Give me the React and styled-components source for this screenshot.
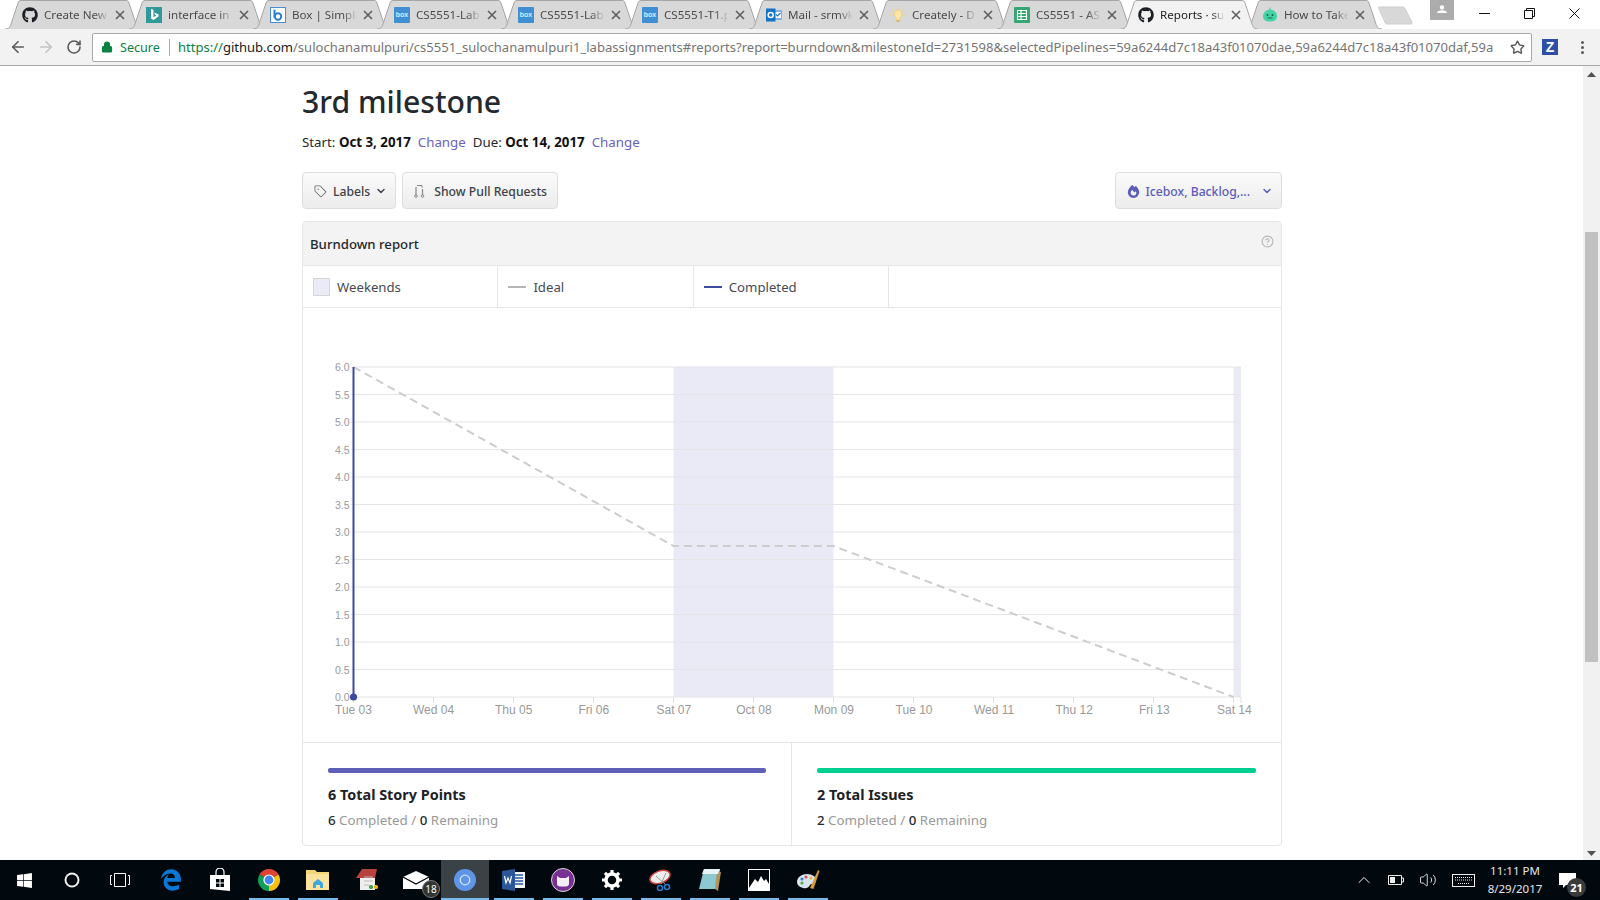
import React from 'react';
import styled, { createGlobalStyle } from 'styled-components';
import { FaGithub, FaWindows, FaEdgeLegacy, FaFire } from 'react-icons/fa6';
import { GoTag } from 'react-icons/go';
import { ChevronDown, CircleHelp, ArrowLeft, ArrowRight, RotateCw, Lock, Star, ChevronUp, Volume2 } from 'lucide-react';

const Global = createGlobalStyle`
  html, body { margin: 0; padding: 0; background: #fff; overflow: hidden; }
  * { box-sizing: border-box; }
`;
const UI = `"Noto Sans", "Open Sans", sans-serif`;

const Screen = styled.div`
  width: 1600px; height: 900px; display: flex; flex-direction: column; overflow: hidden;
  font-family: ${UI}; color: #24292e; background: #fff;
`;

/* ---------- tab strip ---------- */
const TabStrip = styled.div`
  height: 29px; flex: none; display: flex; align-items: flex-start; padding-left: 5px; background: #fff; position: relative;
`;
const TabRoot = styled.div`
  width: 137px; height: 29px; margin-right: -13px; position: relative; flex: none; z-index: ${p => (p.$active ? 2 : 1)};
  display: flex; align-items: center; padding-left: 17px;
`;
const TabShape = styled.svg`
  position: absolute; left: 0; top: 0; width: 137px; height: 29px;
`;
const TabIcon = styled.span`
  width: 16px; height: 16px; display: flex; align-items: center; justify-content: center; position: relative; flex: none;
`;
const TabTitle = styled.span`
  position: relative; margin-left: 6px; width: 65px; white-space: nowrap; overflow: hidden; font-size: 11.6px;
  color: ${p => (p.$active ? '#222' : '#4a4a4a')};
  mask-image: linear-gradient(to right, #000 78%, transparent 100%);
`;
const TabClose = styled.svg`
  position: relative; margin-left: 6px; width: 10px; height: 10px; flex: none;
`;
const BoxFav = styled.span`
  width: 16px; height: 16px; background: #3f8fd2; color: #d8ecfa; border-radius: 1px; font: 700 7px "Liberation Sans", sans-serif;
  display: flex; align-items: center; justify-content: center;
`;
const NewTab = styled.svg`
  width: 36px; height: 19px; margin: 6px 0 0 9px; flex: none; position: relative; z-index: 1;
`;
const WinArea = styled.div`
  margin-left: auto; padding-right: 3px; display: flex; align-items: flex-start; height: 29px;
`;
const Profile = styled.div`
  width: 24px; height: 20px; background: #acacac; margin-right: 8px; display: flex; align-items: center; justify-content: center; padding-bottom: 2px;
`;
const WinBtn = styled.div`
  width: 45px; height: 29px; display: flex; align-items: center; justify-content: center; padding-bottom: 3px;
`;

/* ---------- toolbar ---------- */
const Toolbar = styled.div`
  height: 37px; flex: none; background: #f2f2f2; border-bottom: 1px solid #a8a8a8; display: flex; align-items: center; padding: 0 2px 0 4px;
`;
const NavBtn = styled.div`
  width: 28px; height: 28px; display: flex; align-items: center; justify-content: center; color: ${p => (p.$off ? '#c4c4c4' : '#5a5a5a')};
`;
const Omnibox = styled.div`
  width: 1440px; height: 29px; margin: 0 2px 0 4px; background: #fff; border: 1px solid #a9a9a9; border-radius: 2px; display: flex; align-items: center; padding-left: 8px; font-size: 13.05px;
`;
const Secure = styled.span`
  color: #0b8043; margin-left: 7px; padding-right: 9px; border-right: 1px solid #a9a9a9; line-height: 17px; font-size: 12.6px;
`;
const Url = styled.div`
  margin-left: 8px; width: 1325px; overflow: hidden; white-space: nowrap; color: #757575; flex: none;
`;
const UrlScheme = styled.span` color: #0b8043; `;
const UrlHost = styled.span` color: #1a1a1a; `;
const StarSlot = styled.span`
  margin-left: 7px; display: flex; color: #555;
`;
const ExtBtn = styled.div`
  width: 32px; height: 28px; display: flex; align-items: center; justify-content: center;
`;
const ZBadge = styled.span`
  width: 16px; height: 16px; background: #2f4ea5; color: #fff; font: 700 14px "Liberation Sans", sans-serif; display: flex; align-items: center; justify-content: center;
`;
const Dots = styled.span`
  display: flex; flex-direction: column; gap: 2px;
`;
const Dot = styled.i`
  width: 3px; height: 3px; border-radius: 50%; background: #5a5a5a; display: block;
`;

/* ---------- page ---------- */
const Viewport = styled.div`
  flex: 1; min-height: 0; display: flex;
`;
const Content = styled.main`
  flex: 1; min-width: 0; padding: 16px 0 0 302px; overflow: hidden;
`;
const Column = styled.div`
  width: 980px;
`;
const Title = styled.h1`
  margin: 0; font-size: 30.2px; font-weight: 500; line-height: 40px; color: #24292e;
`;
const Dates = styled.div`
  margin-top: 10px; font-size: 13.3px; line-height: 20px; display: flex; white-space: pre;
`;
const DateStrong = styled.b`
  font-weight: 700; color: #111; margin-right: 7px;
`;
const ChangeLink = styled.a`
  color: #6a62bd; margin-right: 7px;
`;
const Controls = styled.div`
  margin-top: 20px; display: flex; gap: 6px;
`;
const Button = styled.div`
  height: 37px; display: flex; align-items: center; padding: 1px ${p => p.$pr || 10}px 0 11px; border: 1px solid #dedede; border-radius: 4px;
  margin-left: ${p => (p.$right ? 'auto' : 0)};
  background: linear-gradient(#fbfbfb, #ececec); font-size: 12.2px; font-weight: 500; color: ${p => p.$color || '#3c4248'};
`;
const BtnLabel = styled.span`
  margin-left: ${p => p.$ml || 6}px; margin-right: ${p => p.$mr || 0}px;
`;
const Panel = styled.section`
  margin-top: 12px; width: 980px; border: 1px solid #e6e6e6; border-radius: 4px; overflow: hidden;
`;
const PanelHead = styled.header`
  height: 44px; background: #f3f3f3; border-bottom: 1px solid #e6e6e6; display: flex; align-items: center; justify-content: space-between; padding: 0 7px;
  font-size: 13.2px; font-weight: 500; color: #24292e;
`;
const HelpSlot = styled.span`
  display: flex; color: #b5b5b5; margin-top: -4px;
`;
const Legend = styled.div`
  height: 42px; border-bottom: 1px solid #e6e6e6; display: grid; grid-template-columns: repeat(5, 195.4px);
`;
const LegendCell = styled.div`
  display: flex; align-items: center; padding-left: ${p => p.$pl || 10}px; font-size: 13.2px; color: #454b54;
  border-right: ${p => (p.$empty ? 'none' : '1px solid #e6e6e6')};
`;
const Swatch = styled.span`
  width: 17px; height: 18px; background: #e9ebf7; border: 1px solid #d6d6d6; margin-right: 7px;
`;
const LegendLine = styled.span`
  width: 18px; height: 2px; background: ${p => p.$c}; margin-right: 7px;
`;
const Chart = styled.svg`
  display: block; width: 978px; height: 434px;
`;
const Stats = styled.div`
  height: 103px; border-top: 1px solid #e6e6e6; display: grid; grid-template-columns: 488px 490px;
`;
const Stat = styled.div`
  padding: 25px 25px 0 25px; border-left: ${p => (p.$first ? 'none' : '1px solid #e6e6e6')};
`;
const Bar = styled.div`
  height: 5px; border-radius: 2px; background: ${p => p.$c};
`;
const StatTitle = styled.div`
  margin-top: 12px; font-size: 14.4px; font-weight: 700; line-height: 20px; color: #1d2125;
`;
const StatSub = styled.div`
  margin-top: 5px; font-size: 13.35px; line-height: 20px; color: #999;
`;
const StatNum = styled.b`
  font-weight: 500; color: #24292e;
`;
const Scrollbar = styled.div`
  width: 17px; flex: none; background: #f1f1f1; display: flex; flex-direction: column; align-items: center;
`;
const ScrollArrow = styled.svg`
  width: 9px; height: 5px; margin: 6px 0; flex: none;
`;
const Thumb = styled.div`
  width: 13px; height: 430px; background: #c1c1c1; margin-top: 149px; margin-bottom: 183px; flex: none;
`;

/* ---------- taskbar ---------- */
const Taskbar = styled.footer`
  height: 40px; flex: none; background: #02090e; display: flex; align-items: stretch; color: #eee;
`;
const SysItem = styled.div`
  width: 48px; display: flex; align-items: center; justify-content: center; color: #fff;
`;
const Apps = styled.div`
  margin-left: 3px; display: flex;
`;
const AppItem = styled.div`
  width: 49px; padding-right: 2px; position: relative; display: flex; align-items: center; justify-content: center;
  background: ${p => (p.$active ? 'linear-gradient(#3b4245,#3b4245) 0 0 / 48px 100% no-repeat' : 'none')};
  &::after {
    content: ${p => (p.$running ? '""' : 'none')};
    position: absolute; bottom: 0; left: ${p => (p.$active ? 0 : '4px')}; width: ${p => (p.$active ? '48px' : '40px')}; height: 2px; background: #76b9ed;
  }
`;
const AppBadge = styled.span`
  position: absolute; right: 1px; bottom: 2px; width: 18px; height: 18px; border-radius: 50%; background: #333; border: 1px solid #777; color: #fff;
  font-size: 10px; display: flex; align-items: center; justify-content: center; line-height: 1;
`;
const Tray = styled.div`
  margin-left: auto; display: flex; align-items: center;
`;
const TrayIcon = styled.span`
  width: ${p => p.$w || 32}px; display: flex; justify-content: center; color: #eee;
`;
const Clock = styled.div`
  width: 66px; text-align: center; font-size: 11.5px; line-height: 18px; color: #e6e6e6; white-space: nowrap;
`;
const Notify = styled.div`
  width: 38px; margin-right: 14px; position: relative; height: 40px; display: flex; align-items: center; justify-content: center;
`;
const NotifyBadge = styled.span`
  position: absolute; right: 0; bottom: 3px; width: 19px; height: 19px; border-radius: 50%; background: #3a3a3a; color: #fff;
  font-size: 11px; font-weight: 700; display: flex; align-items: center; justify-content: center;
`;

/* ---------- favicons ---------- */
const Fav = {
  gh: <FaGithub size={16} color="#1b1f23" />,
  bing: (
    <svg width="16" height="16" viewBox="0 0 16 16"><rect width="16" height="16" fill="#2f9a99" /><path d="M5 2l2.4.8v7.4l3-1.7-1.4-.7-.9-2.2 4.4 1.6v2.3L7.4 13 5 11.6z" fill="#fff" /></svg>
  ),
  box: (
    <svg width="16" height="16" viewBox="0 0 16 16"><rect x=".5" y=".5" width="15" height="15" fill="#fff" stroke="#4a90d0" /><path d="M4.5 2.5v8" stroke="#2b7fca" strokeWidth="2" /><circle cx="8" cy="9.5" r="3.2" fill="none" stroke="#2b7fca" strokeWidth="2" /></svg>
  ),
  boxb: <BoxFav>box</BoxFav>,
  mail: (
    <svg width="16" height="16" viewBox="0 0 16 16"><rect x="7" y="3" width="9" height="10" fill="#7cb3e6" /><path d="M9 5h6v6H9z" fill="#fff" /><path d="M10 7.5l1.5 1.5 3-3" stroke="#1f74c4" fill="none" strokeWidth="1.2" /><rect y="1.5" width="9.5" height="13" fill="#1273c7" /><circle cx="4.7" cy="8" r="2.5" fill="none" stroke="#fff" strokeWidth="1.5" /></svg>
  ),
  bulb: (
    <svg width="16" height="16" viewBox="0 0 16 16"><path d="M8 3a4 4 0 0 0-2.3 7.2L6.4 13h3.2l.7-2.8A4 4 0 0 0 8 3z" fill="#fbe7a3" stroke="#f1c84f" strokeWidth=".6" /><rect x="6.5" y="13" width="3" height="2" fill="#d8b65a" /><path d="M8 0v2M2 2l1.5 1.5M14 2l-1.5 1.5M0 8h2M14 8h2" stroke="#f3cf6a" strokeWidth=".8" /></svg>
  ),
  sheet: (
    <svg width="16" height="16" viewBox="0 0 16 16"><rect width="16" height="16" rx="1" fill="#34a871" /><path d="M3.5 3.5h9v9h-9zM3.5 6.5h9M3.5 9.5h9M7 3.5v9" fill="none" stroke="#fff" strokeWidth="1.1" /></svg>
  ),
  bot: (
    <svg width="16" height="16" viewBox="0 0 16 16"><path d="M1 9a7 6.500 0 0 1 14 0c0 3.500-2 5.500-7 5.500S1 12.500 1 9z" fill="#45d3a5" /><rect x="7.4" y="0.500" width="1.2" height="3" fill="#45d3a5" /><circle cx="5.5" cy="8" r="1" fill="#1a5f4c" /><circle cx="10.5" cy="8" r="1" fill="#1a5f4c" /><rect x="5.5" y="10.500" width="5" height=".9" fill="#1a5f4c" /></svg>
  ),
};

const tabs = [
  ['gh', 'Create New'], ['bing', 'interface in'], ['box', 'Box | Simple'], ['boxb', 'CS5551-Lab'], ['boxb', 'CS5551-Lab'],
  ['boxb', 'CS5551-T1.p'], ['mail', 'Mail - srmvk'], ['bulb', 'Creately - D'], ['sheet', 'CS5551 - AS'], ['gh', 'Reports · sul', true], ['bot', 'How to Take'],
];

function Tab({ icon, title, active }) {
  return (
    <TabRoot $active={active}>
      <TabShape viewBox="0 0 137 29">
        <path d="M0 29c3 0 4.500-1 5.500-3.500L13 3c.6-2 1.600-2.500 3-2.500h105c1.400 0 2.400.5 3 2.500l7.500 22.500c1 2.500 2.500 3.500 5.500 3.500"
          fill={active ? '#f2f2f2' : '#d8d8d8'} stroke="#a6a6a6" strokeWidth="1" />
      </TabShape>
      <TabIcon>{Fav[icon]}</TabIcon>
      <TabTitle $active={active}>{title}</TabTitle>
      <TabClose viewBox="0 0 10 10"><path d="M1 1l8 8M9 1l-8 8" stroke="#5f5f5f" strokeWidth="1.6" /></TabClose>
    </TabRoot>
  );
}

/* ---------- taskbar icons ---------- */
const sector = (a, b, r = 11) => {
  const p = t => [12 + r * Math.cos((t * Math.PI) / 180), 12 + r * Math.sin((t * Math.PI) / 180)].map(n => n.toFixed(2)).join(' ');
  return `M12 12L${p(a)}A${r} ${r} 0 0 1 ${p(b)}Z`;
};
const TB = {
  edge: <FaEdgeLegacy size={22} color="#0a78d4" />,
  store: (
    <svg width="22" height="24" viewBox="0 0 22 24"><path d="M7 7V4a4 4 0 0 1 8 0v3" fill="none" stroke="#eee" strokeWidth="1.3" /><path d="M1 7h20v16L1 21z" fill="#fff" /><path d="M7 11h3.500v3.500H7zM11.500 11H15v3.500h-3.500zM7 15.500h3.500V19H7zM11.500 15.500H15V19h-3.500z" fill="#02090e" /></svg>
  ),
  chrome: (
    <svg width="24" height="24" viewBox="0 0 24 24"><path d={sector(210, 330)} fill="#db4437" /><path d={sector(330, 90)} fill="#f4c20d" /><path d={sector(90, 210)} fill="#0f9d58" /><circle cx="12" cy="12" r="5.600" fill="#fff" /><circle cx="12" cy="12" r="4.400" fill="#4285f4" /></svg>
  ),
  chromeActive: (
    <svg width="24" height="24" viewBox="0 0 24 24"><circle cx="12" cy="12" r="11" fill="#5f95e6" /><circle cx="12" cy="12" r="4.800" fill="#5f95e6" stroke="#cfe0fa" strokeWidth="1.3" /></svg>
  ),
  folder: (
    <svg width="24" height="22" viewBox="0 0 24 22"><path d="M0 1h9l2 2h12v18H0z" fill="#f3d675" /><path d="M0 5h23v16H0z" fill="#fae39c" /><path d="M7 14l5-4 5 4v5h-3v-3h-4v3H7z" fill="#3da7e0" /></svg>
  ),
  journal: (
    <svg width="24" height="26" viewBox="0 0 24 26"><path d="M5 6h15v17H5z" fill="#efefef" /><path d="M1 11L7 2h15l-2 9z" fill="#b9423f" /><path d="M9 10h9M9 14h9M9 18h5" stroke="#bbb" /><path d="M14 20h4m-2-2v4" stroke="#3fa648" strokeWidth="2.500" /><path d="M19 20h4m-2-2v4" stroke="#e5b022" strokeWidth="2.500" /></svg>
  ),
  mail: (
    <svg width="26" height="18" viewBox="0 0 26 18"><path d="M0 6L13 0l13 6v12H0z" fill="#fff" /><path d="M0 6l13 7 13-7" fill="none" stroke="#02090e" strokeWidth="1.200" /></svg>
  ),
  word: (
    <svg width="24" height="22" viewBox="0 0 24 22"><path d="M11 3h12v16H11z" fill="#f3f5fa" /><path d="M13 6h8M13 9h8M13 12h8M13 15h8" stroke="#2b579a" strokeWidth="1.300" /><path d="M0 2l13-2v22L0 20z" fill="#2b579a" /><path d="M2.500 7l1.500 7 2-5 2 5 1.500-7" fill="none" stroke="#fff" strokeWidth="1.200" /></svg>
  ),
  cat: (
    <svg width="24" height="24" viewBox="0 0 24 24"><circle cx="12" cy="12" r="11.500" fill="#7a2f95" stroke="#d9d9d9" /><path d="M6 8l3 2h6l3-2v8c0 1.500-1.500 2.500-3 2.500H9c-1.500 0-3-1-3-2.500z" fill="#f4eef7" /></svg>
  ),
  gear: (
    <svg width="22" height="22" viewBox="0 0 22 22"><circle cx="11" cy="11" r="6" fill="none" stroke="#fff" strokeWidth="3.500" /><path d="M11 1v4M11 17v4M1 11h4M17 11h4M3.900 3.900l2.800 2.800M15.300 15.300l2.800 2.800M18.100 3.900l-2.800 2.800M6.700 15.300l-2.800 2.800" stroke="#fff" strokeWidth="3.200" /></svg>
  ),
  snip: (
    <svg width="24" height="24" viewBox="0 0 24 24"><ellipse cx="11" cy="9" rx="10.500" ry="6" transform="rotate(-20 11 9)" fill="#eee" stroke="#c8413c" strokeWidth="1.500" /><path d="M7 8l10 9M17 5l-5 11" stroke="#9a9a9a" /><circle cx="18" cy="19" r="2.500" fill="none" stroke="#2a78c8" strokeWidth="1.500" /><circle cx="11" cy="20" r="2.500" fill="none" stroke="#2a78c8" strokeWidth="1.500" /></svg>
  ),
  note: (
    <svg width="24" height="24" viewBox="0 0 24 24"><path d="M6 1h16l-3 20H1z" fill="#8ccad2" /><path d="M19 3l4 1-3 19-3-2z" fill="#b1925c" /><path d="M6 1h16l-2 5H4z" fill="#e7f4f5" /></svg>
  ),
  photos: (
    <svg width="22" height="22" viewBox="0 0 22 22"><rect x=".5" y=".5" width="21" height="21" fill="#02090e" stroke="#fff" /><path d="M1 19l6-9 3 3 3-6 3 5 2-2 3 5v6H1z" fill="#fff" /></svg>
  ),
  paint: (
    <svg width="24" height="24" viewBox="0 0 24 24"><path d="M1 14c0-5 5-8 10-8s10 3 9 7-5 2-6 4-3 4-7 3-6-3-6-6z" fill="#d6e6ef" /><circle cx="6" cy="11" r="1.600" fill="#3d7ec9" /><circle cx="10" cy="9" r="1.600" fill="#d94f4f" /><circle cx="15" cy="10" r="1.600" fill="#e7b93a" /><circle cx="6" cy="15" r="1.600" fill="#57a84c" /><path d="M14 20L22 2l1.500 1-6 18z" fill="#d99a3b" /></svg>
  ),
};
const apps = [
  ['edge'], ['store'], ['chrome', 1], ['folder', 1], ['journal'], ['mail', 0, 0, '18'], ['chromeActive', 1, 1],
  ['word', 1], ['cat', 1], ['gear', 1], ['snip', 1], ['note', 1], ['photos', 1], ['paint', 1],
];

/* ---------- chart ---------- */
const OX = 303, OY = 308;
const X0 = 353.5, STEP = 80, LABEL_STEP = 80.08, TOP = 367, YSTEP = 27.5, RIGHT = 1241;
const xLabels = ['Tue 03', 'Wed 04', 'Thu 05', 'Fri 06', 'Sat 07', 'Oct 08', 'Mon 09', 'Tue 10', 'Wed 11', 'Thu 12', 'Fri 13', 'Sat 14'];
const yLabels = Array.from({ length: 13 }, (_, i) => (6 - i * 0.5).toFixed(1));

function BurnChart() {
  const bottom = TOP + 12 * YSTEP;
  return (
    <Chart viewBox={`${OX} ${OY} 978 434`}>
      <rect x={X0 + 4 * STEP} y={TOP} width={STEP * 2} height={330} fill="#e9eaf6" />
      <rect x={X0 + 11 * STEP} y={TOP} width={RIGHT - X0 - 11 * STEP} height={330} fill="#e9eaf6" />
      {yLabels.map((l, i) => (
        <g key={l}>
          <line x1={X0 - 3} x2={RIGHT} y1={TOP + i * YSTEP} y2={TOP + i * YSTEP} stroke="#e5e5e8" strokeWidth="1" />
          <text x={349.5} y={TOP + i * YSTEP + 4} textAnchor="end" fontFamily="Liberation Sans" fontSize="10.500" fill="#999">{l}</text>
        </g>
      ))}
      {xLabels.map((l, i) => (
        <g key={l}>
          <line x1={X0 + i * STEP} x2={X0 + i * STEP} y1={bottom} y2={bottom + 6} stroke="#e0e0e0" />
          <text x={X0 + i * LABEL_STEP} y={714} textAnchor="middle" fontFamily="Liberation Sans" fontSize="12" fill="#999">{l}</text>
        </g>
      ))}
      <line x1={RIGHT} x2={RIGHT} y1={bottom} y2={bottom + 6} stroke="#e0e0e0" />
      <polyline points={`${X0},${TOP} ${X0 + 4 * STEP},546 ${X0 + 6 * STEP},546 ${X0 + 11 * STEP},${bottom}`} fill="none" stroke="#cdcdcd" strokeWidth="2" strokeDasharray="8 5" />
      <line x1={X0} x2={X0} y1={TOP} y2={bottom} stroke="#3c4a9e" strokeWidth="2" />
      <circle cx={X0} cy={bottom} r="3.600" fill="#3c4a9e" />
    </Chart>
  );
}

function StatBlock({ first, color, n, title, done, left }) {
  return (
    <Stat $first={first}>
      <Bar $c={color} />
      <StatTitle>{n} {title}</StatTitle>
      <StatSub><StatNum>{done}</StatNum> Completed / <StatNum>{left}</StatNum> Remaining</StatSub>
    </Stat>
  );
}

export default function App() {
  return (
    <Screen>
      <Global />
      <TabStrip>
        {tabs.map(([icon, title, active], i) => <Tab key={i} icon={icon} title={title} active={active} />)}
        <NewTab viewBox="0 0 36 19"><path d="M1 1h24c1 0 1.500.5 2 1.500L34 16c.5 1 0 2-1 2H9c-1 0-1.500-.5-2-1.500L1 3C.5 2 0 1 1 1z" fill="#d8d8d8" stroke="#cfcfcf" /></NewTab>
        <WinArea>
          <Profile>
            <svg width="10" height="9" viewBox="0 0 14 12"><circle cx="7" cy="3.200" r="3" fill="#fff" /><path d="M0 11c0-3 3-4 7-4s7 1 7 4z" fill="#fff" /></svg>
          </Profile>
          <WinBtn><svg width="11" height="11" viewBox="0 0 11 11"><path d="M0 5.500h11" stroke="#111" /></svg></WinBtn>
          <WinBtn><svg width="11" height="11" viewBox="0 0 11 11"><path d="M.5 2.500h8v8h-8zM2.500 2.500v-2h8v8h-2" fill="none" stroke="#111" /></svg></WinBtn>
          <WinBtn><svg width="11" height="11" viewBox="0 0 11 11"><path d="M.5.500l10 10M10.500.500l-10 10" stroke="#111" /></svg></WinBtn>
        </WinArea>
      </TabStrip>

      <Toolbar>
        <NavBtn><ArrowLeft size={18} strokeWidth={2.200} /></NavBtn>
        <NavBtn $off><ArrowRight size={18} strokeWidth={2.200} /></NavBtn>
        <NavBtn><RotateCw size={16} strokeWidth={2.400} /></NavBtn>
        <Omnibox>
          <Lock size={12} color="#0b8043" fill="#0b8043" strokeWidth={2.400} />
          <Secure>Secure</Secure>
          <Url>
            <UrlScheme>https://</UrlScheme><UrlHost>github.com</UrlHost>/sulochanamulpuri/cs5551_sulochanamulpuri1_labassignments#reports?report=burndown&amp;milestoneId=2731598&amp;selectedPipelines=59a6244d7c18a43f01070dae,59a6244d7c18a43f01070daf,59a
          </Url>
          <StarSlot><Star size={15} strokeWidth={2.200} /></StarSlot>
        </Omnibox>
        <ExtBtn><ZBadge>Z</ZBadge></ExtBtn>
        <ExtBtn><Dots><Dot /><Dot /><Dot /></Dots></ExtBtn>
      </Toolbar>

      <Viewport>
        <Content>
          <Column>
            <Title>3rd milestone</Title>
            <Dates>
              <span>Start: </span><DateStrong>Oct 3, 2017</DateStrong><ChangeLink>Change</ChangeLink>
              <span>Due: </span><DateStrong>Oct 14, 2017</DateStrong><ChangeLink>Change</ChangeLink>
            </Dates>
            <Controls>
              <Button $pr={8}><GoTag size={13} color="#666" /><BtnLabel $mr={5}>Labels</BtnLabel><ChevronDown size={12} strokeWidth={3} /></Button>
              <Button>
                <svg width="11" height="14" viewBox="0 0 11 14"><path d="M2 3v8M8.500 5v6M3 1.500h4.500l1 2" fill="none" stroke="#888" strokeWidth="1.200" /><circle cx="2" cy="12" r="1.300" fill="none" stroke="#888" /><circle cx="8.500" cy="12" r="1.300" fill="none" stroke="#888" /></svg>
                <BtnLabel $ml={9}>Show Pull Requests</BtnLabel>
              </Button>
              <Button $right $color="#5c5cb8" $pr={8}><FaFire size={13} /><BtnLabel $mr={11}>Icebox, Backlog,...</BtnLabel><ChevronDown size={12} strokeWidth={3} /></Button>
            </Controls>
            <Panel>
              <PanelHead>Burndown report<HelpSlot><CircleHelp size={13} /></HelpSlot></PanelHead>
              <Legend>
                <LegendCell><Swatch />Weekends</LegendCell>
                <LegendCell><LegendLine $c="#b5b5b5" />Ideal</LegendCell>
                <LegendCell><LegendLine $c="#3c4a9e" />Completed</LegendCell>
                <LegendCell $empty />
              </Legend>
              <BurnChart />
              <Stats>
                <StatBlock first color="#5e60b8" n={6} title="Total Story Points" done={6} left={0} />
                <StatBlock color="#00d08f" n={2} title="Total Issues" done={2} left={0} />
              </Stats>
            </Panel>
          </Column>
        </Content>
        <Scrollbar>
          <ScrollArrow viewBox="0 0 9 5"><path d="M4.500 0L9 5H0z" fill="#505050" /></ScrollArrow>
          <Thumb />
          <ScrollArrow viewBox="0 0 9 5"><path d="M4.500 5L0 0h9z" fill="#505050" /></ScrollArrow>
        </Scrollbar>
      </Viewport>

      <Taskbar>
        <SysItem><FaWindows size={17} /></SysItem>
        <SysItem><svg width="16" height="16" viewBox="0 0 16 16"><circle cx="8" cy="8" r="6.500" fill="none" stroke="#eee" strokeWidth="2" /></svg></SysItem>
        <SysItem><svg width="20" height="14" viewBox="0 0 20 14"><path d="M4.500.500h11v13h-11zM2 2.500H.500v9H2M18 2.500h1.500v9H18" fill="none" stroke="#fff" /></svg></SysItem>
        <Apps>
          {apps.map(([k, running, active, badge], i) => (
            <AppItem key={i} $running={!!running} $active={!!active}>
              {TB[k]}
              {badge && <AppBadge>{badge}</AppBadge>}
            </AppItem>
          ))}
        </Apps>
        <Tray>
          <TrayIcon><ChevronUp size={20} strokeWidth={1.200} /></TrayIcon>
          <TrayIcon><svg width="16" height="10" viewBox="0 0 16 10"><path d="M.5.500h13v9H.5zM14 3h1.500v4H14" fill="none" stroke="#eee" /><rect x="2" y="2" width="5" height="6" fill="#eee" /></svg></TrayIcon>
          <TrayIcon><Volume2 size={18} strokeWidth={1.200} /></TrayIcon>
          <TrayIcon $w={38}><svg width="23" height="13" viewBox="0 0 23 13"><rect x=".5" y=".5" width="22" height="12" fill="none" stroke="#eee" /><path d="M3 3.500h17M3 6h17M6 9.500h11" stroke="#eee" strokeDasharray="1 1" /></svg></TrayIcon>
          <Clock>11:11 PM<br />8/29/2017</Clock>
          <Notify>
            <svg width="17" height="15" viewBox="0 0 17 15"><path d="M0 0h17v12H7l-3 3v-3H0z" fill="#fff" /></svg>
            <NotifyBadge>21</NotifyBadge>
          </Notify>
        </Tray>
      </Taskbar>
    </Screen>
  );
}
